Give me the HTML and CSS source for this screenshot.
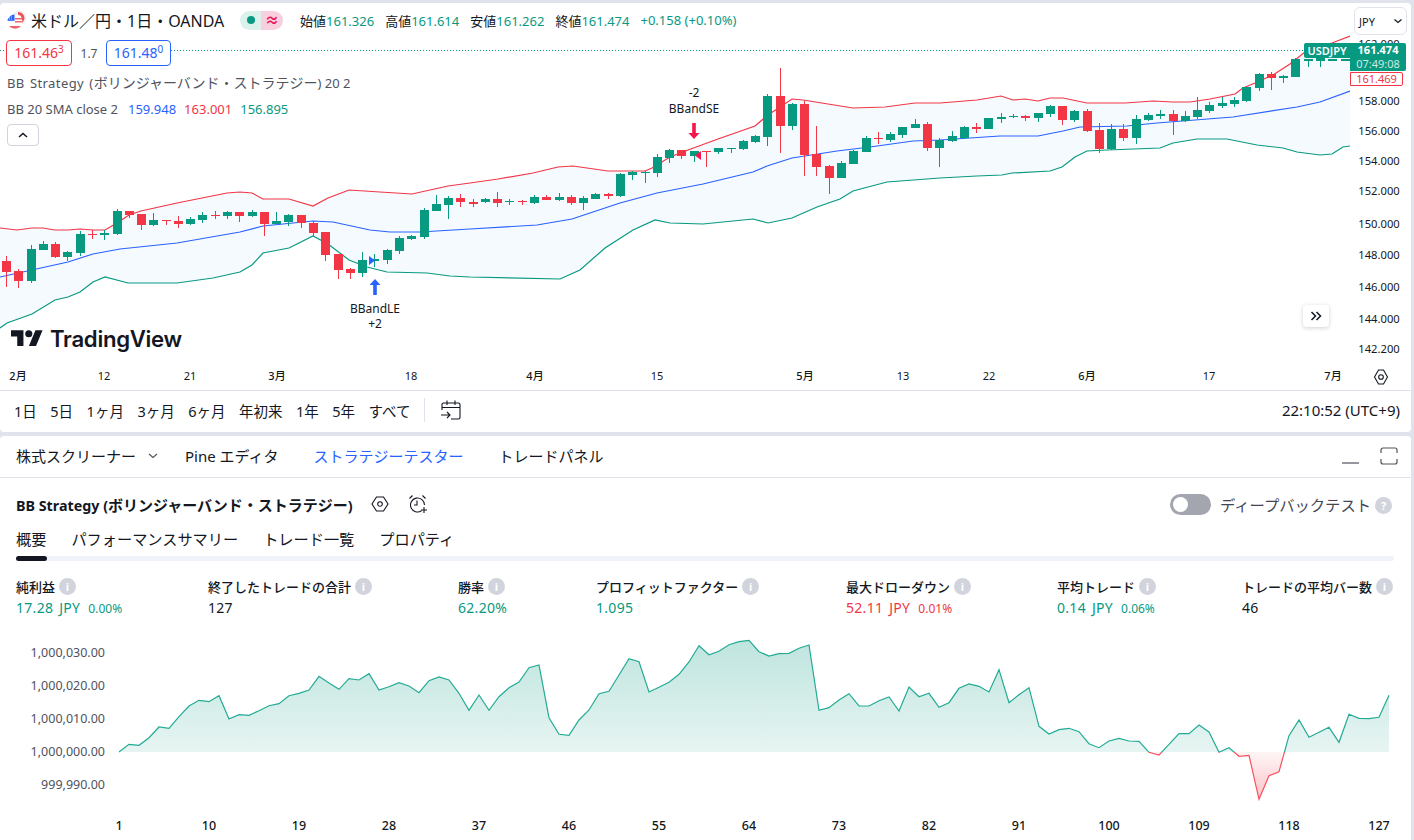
FILE: index.html
```html
<!DOCTYPE html>
<html lang="ja">
<head>
<meta charset="utf-8">
<title>USDJPY</title>
<link rel="stylesheet" href="styles.css">
</head>
<body>
<section class="panel chart-panel">
  <div class="chart">
    <svg id="market" class="market" viewBox="0 3 1411 387" width="1411" height="387" xmlns="http://www.w3.org/2000/svg">
      <defs><clipPath id="pane"><rect x="0" y="3" width="1350" height="387"/></clipPath></defs>
      <g clip-path="url(#pane)">
        <path id="band" class="band"/>
        <line x1="0" y1="50.5" x2="1350" y2="50.5" class="last-line"/>
        <polyline id="lower" class="line line-lower"/>
        <polyline id="middle" class="line line-middle"/>
        <polyline id="upper" class="line line-upper"/>
        <g id="candles" shape-rendering="crispEdges"></g>
        <path class="sig-blue" d="M375 279l5.500 6h-3.700v10h-3.600v-10h-3.700z"/>
        <path class="sig-blue" d="M369 256l6 4.500-6 4.500z"/>
        <path class="sig-red" d="M692.200 123h3.600v10h3.700l-5.500 6-5.500-6h3.700z"/>
        <path class="sig-red" d="M701 151v9l-6-4.500z"/>
        <text class="sig-text" x="375" y="313">BBandLE</text>
        <text class="sig-text" x="375" y="328">+2</text>
        <text class="sig-text" x="694" y="97">-2</text>
        <text class="sig-text" x="694" y="113">BBandSE</text>
      </g>
      <text class="price" x="1379" y="48">162.000</text>
      <text class="price" x="1379" y="105">158.000</text>
      <text class="price" x="1379" y="135">156.000</text>
      <text class="price" x="1379" y="165">154.000</text>
      <text class="price" x="1379" y="195">152.000</text>
      <text class="price" x="1379" y="228">150.000</text>
      <text class="price" x="1379" y="259">148.000</text>
      <text class="price" x="1379" y="291">146.000</text>
      <text class="price" x="1379" y="323">144.000</text>
      <text class="price" x="1379" y="353">142.200</text>
      <text class="time strong" x="18" y="380">2月</text>
      <text class="time" x="104" y="380">12</text>
      <text class="time" x="190" y="380">21</text>
      <text class="time strong" x="277" y="380">3月</text>
      <text class="time" x="411" y="380">18</text>
      <text class="time strong" x="535" y="380">4月</text>
      <text class="time" x="657" y="380">15</text>
      <text class="time strong" x="805" y="380">5月</text>
      <text class="time" x="903" y="380">13</text>
      <text class="time" x="989" y="380">22</text>
      <text class="time strong" x="1087" y="380">6月</text>
      <text class="time" x="1209" y="380">17</text>
      <text class="time strong" x="1333" y="380">7月</text>
      <g class="icon-line" transform="translate(1373 369)">
        <path d="M5.500 1h5l4 7-4 7h-5l-4-7z"/><circle cx="8" cy="8" r="2.300"/>
      </g>
    </svg>

    <div class="legend">
      <div class="symbol-row">
        <svg class="flag" viewBox="0 0 20 20" width="20" height="20" xmlns="http://www.w3.org/2000/svg">
          <circle cx="12" cy="8" r="7.500" fill="#f0f1f6"/>
          <path d="M11 3.500a4.800 4.800 0 0 1 5 4.500 4.800 4.800 0 0 1-2.500 4" fill="none" stroke="#ef5350" stroke-width="3"/>
          <circle cx="8" cy="12" r="7.500" fill="#fff"/>
          <path d="M2 16a8 8 0 0 0 12 0z" fill="#f0626b"/>
          <path d="M.500 11a7.500 7.500 0 0 1 7-6.500V11z" fill="#2962ff"/>
          <path d="M8 8h7v1.500H8zM8 11h7.500v1.500H8z" fill="#f0626b"/>
          <path d="M2 9h4M2 7h4M1.500 11h5" stroke="#fff" stroke-width=".8" stroke-dasharray="1 1"/>
        </svg>
        <span class="symbol">米ドル／円・1日・OANDA</span>
        <span class="status"><span class="status-open"><i class="status-dot"></i></span><span class="status-delay">≈</span></span>
        <span class="ohlc">
          <span class="o-item">始値<b>161.326</b></span>
          <span class="o-item">高値<b>161.614</b></span>
          <span class="o-item">安値<b>161.262</b></span>
          <span class="o-item">終値<b>161.474</b></span>
          <b class="o-chg">+0.158 (+0.10%)</b>
        </span>
      </div>
      <div class="trade-row">
        <span class="quote quote-sell">161.46<sup>3</sup></span>
        <span class="spread">1.7</span>
        <span class="quote quote-buy">161.48<sup>0</sup></span>
      </div>
      <div class="study-row study-strategy"><span><span class="lead">BB Strategy (</span><span class="jp">ボリンジャーバンド・ストラテジー</span>) 20 2</span></div>
      <div class="study-row study-bb">BB 20 SMA close 2
        <span class="v-blue">159.948</span><span class="v-red">163.001</span><span class="v-green">156.895</span>
      </div>
      <div class="collapse"><svg viewBox="0 0 12 8" width="12" height="8" xmlns="http://www.w3.org/2000/svg"><path d="M2 6l4-3.500L10 6" fill="none" stroke="#131722" stroke-width="1.500"/></svg></div>
    </div>

    <div class="logo">
      <svg viewBox="0 4 36 18" width="32" height="16.500" xmlns="http://www.w3.org/2000/svg"><path d="M14 22H7V11H0V4h14v18zM28 22h-8l7.500-18h8L28 22z" fill="#131722"/><circle cx="20" cy="8" r="4" fill="#131722"/></svg>
      <span class="logo-text">TradingView</span>
    </div>

    <div class="currency">JPY<svg viewBox="0 0 10 6" width="10" height="6" xmlns="http://www.w3.org/2000/svg"><path d="M1.500 1.500L5 4.500l3.500-3" fill="none" stroke="#131722" stroke-width="1.200"/></svg></div>
    <div class="tag-name">USDJPY</div>
    <div class="tag-price"><b>161.474</b><span>07:49:08</span></div>
    <div class="tag-sell">161.469</div>
    <div class="scroll-btn"><svg viewBox="0 0 12 10" width="12" height="10" xmlns="http://www.w3.org/2000/svg"><path d="M1.500 1l4 4-4 4M6.500 1l4 4-4 4" fill="none" stroke="#131722" stroke-width="1.500"/></svg></div>
  </div>

  <div class="range-bar">
    <span class="range">1日</span><span class="range">5日</span><span class="range">1ヶ月</span><span class="range">3ヶ月</span><span class="range">6ヶ月</span><span class="range">年初来</span><span class="range">1年</span><span class="range">5年</span><span class="range">すべて</span>
    <i class="sep"></i>
    <svg class="cal" viewBox="0 0 22 22" width="22" height="22" xmlns="http://www.w3.org/2000/svg"><path d="M2 11V5.500A1.500 1.500 0 0 1 3.500 4h15A1.500 1.500 0 0 1 20 5.500v13a1.500 1.500 0 0 1-1.500 1.500H11M2 8.500h18M7 1.500V6M15 1.500V6M1 16h9M7 13l3 3-3 3" fill="none" stroke="#131722" stroke-width="1.100"/></svg>
    <span class="clock">22:10:52 (UTC+9)</span>
  </div>
</section>

<section class="panel tester">
  <nav class="tabs">
    <span class="tab tab-screener">株式スクリーナー<svg viewBox="0 0 10 6" width="10" height="6" xmlns="http://www.w3.org/2000/svg"><path d="M1 1l4 3.500L9 1" fill="none" stroke="#50535e" stroke-width="1.100"/></svg></span>
    <span class="tab tab-pine">Pine エディタ</span>
    <span class="tab tab-active">ストラテジーテスター</span>
    <span class="tab">トレードパネル</span>
    <span class="win-icons">
      <svg viewBox="0 0 17 2" width="17" height="2" xmlns="http://www.w3.org/2000/svg"><path d="M0 1h17" stroke="#50535e" stroke-width="1.200"/></svg>
      <svg viewBox="0 0 18 18" width="18" height="18" xmlns="http://www.w3.org/2000/svg"><path d="M1 6V3a2 2 0 0 1 2-2h12a2 2 0 0 1 2 2v3M1 12v3a2 2 0 0 0 2 2h12a2 2 0 0 0 2-2v-3" fill="none" stroke="#50535e" stroke-width="1.200"/></svg>
    </span>
  </nav>
  <div class="title-row">
    <strong class="strategy-name">BB Strategy (<span class="jp-title">ボリンジャーバンド・ストラテジー</span>)</strong>
    <svg class="t-icon t-gear" viewBox="0 0 18 18" width="18" height="18" xmlns="http://www.w3.org/2000/svg"><path d="M5.500 2h7l4.500 7-4.500 7h-7L1 9z M11.300 9a2.300 2.300 0 1 1-4.600 0 2.300 2.300 0 0 1 4.600 0z" fill="none" stroke="#131722" stroke-width="1.100"/></svg>
    <svg class="t-icon t-alarm" viewBox="0 0 20 20" width="20" height="20" xmlns="http://www.w3.org/2000/svg"><path d="M13.500 16.700A7 7 0 1 1 16.500 11M9 6.500v4.500H6M1.500 4.500l3-3M17.500 4.500l-3-3M16 13v6M13 16h6" fill="none" stroke="#131722" stroke-width="1.100"/></svg>
    <span class="deep">
      <i class="toggle"><i class="knob"></i></i>
      <span class="deep-label">ディープバックテスト</span>
      <i class="info info-q">?</i>
    </span>
  </div>
  <div class="subtabs">
    <span class="subtab">概要</span><span class="subtab">パフォーマンスサマリー</span><span class="subtab">トレード一覧</span><span class="subtab">プロパティ</span>
  </div>
  <div class="track"><i class="thumb"></i></div>
  <div class="metrics">
    <div class="metric"><div class="m-label">純利益<i class="info">i</i></div><div class="m-value v-green">17.28 JPY<small>0.00%</small></div></div>
    <div class="metric"><div class="m-label">終了したトレードの合計<i class="info">i</i></div><div class="m-value">127</div></div>
    <div class="metric"><div class="m-label">勝率<i class="info">i</i></div><div class="m-value v-green">62.20%</div></div>
    <div class="metric"><div class="m-label">プロフィットファクター<i class="info">i</i></div><div class="m-value v-green">1.095</div></div>
    <div class="metric"><div class="m-label">最大ドローダウン<i class="info">i</i></div><div class="m-value v-red">52.11 JPY<small>0.01%</small></div></div>
    <div class="metric"><div class="m-label">平均トレード<i class="info">i</i></div><div class="m-value v-green">0.14 JPY<small>0.06%</small></div></div>
    <div class="metric"><div class="m-label">トレードの平均バー数<i class="info">i</i></div><div class="m-value">46</div></div>
  </div>
  <svg id="equity" class="equity" viewBox="0 630 1411 210" width="1411" height="210" xmlns="http://www.w3.org/2000/svg">
    <defs>
      <linearGradient id="gPos" gradientUnits="userSpaceOnUse" x1="0" y1="640" x2="0" y2="752"><stop offset="0" stop-color="#089981" stop-opacity=".26"/><stop offset="1" stop-color="#089981" stop-opacity=".1"/></linearGradient>
      <linearGradient id="gNeg" gradientUnits="userSpaceOnUse" x1="0" y1="752" x2="0" y2="800"><stop offset="0" stop-color="#f23645" stop-opacity=".05"/><stop offset="1" stop-color="#f23645" stop-opacity=".3"/></linearGradient>
      <clipPath id="above"><rect x="0" y="630" width="1411" height="122"/></clipPath>
      <clipPath id="below"><rect x="0" y="752" width="1411" height="88"/></clipPath>
    </defs>
    <path id="eqFillPos" fill="url(#gPos)" clip-path="url(#above)"/>
    <path id="eqFillNeg" fill="url(#gNeg)" clip-path="url(#below)"/>
    <polyline id="eqLinePos" class="eq-line eq-pos" clip-path="url(#above)"/>
    <polyline id="eqLineNeg" class="eq-line eq-neg" clip-path="url(#below)"/>
    <text class="eq-y" x="105" y="657">1,000,030.00</text>
    <text class="eq-y" x="105" y="690">1,000,020.00</text>
    <text class="eq-y" x="105" y="723">1,000,010.00</text>
    <text class="eq-y" x="105" y="756">1,000,000.00</text>
    <text class="eq-y" x="105" y="789">999,990.00</text>
    <g id="eqX"></g>
  </svg>
</section>
<script src="chart.js"></script>
</body>
</html>
```
FILE: styles.css
```css
* { box-sizing: border-box; }
html, body { margin: 0; height: 100%; overflow: hidden; }
body {
  background: #e0e3eb;
  padding: 3px 3px 0 0;
  font-family: "Noto Sans", "Noto Sans CJK JP", sans-serif;
  color: #131722;
}
i { font-style: normal; }
.panel { background: #fff; border-radius: 4px; }
.chart-panel { height: 429px; display: flex; flex-direction: column; }
.chart { position: relative; height: 387px; flex: none; overflow: hidden; }
.market { position: absolute; left: 0; top: 0; }

.band { fill: #f5fafe; }
.last-line { stroke: #089981; stroke-width: 1; stroke-dasharray: 1 2; }
.line { fill: none; stroke-width: 1.200; }
.line-upper { stroke: #f23645; }
.line-middle { stroke: #2962ff; }
.line-lower { stroke: #089981; }
.sig-blue { fill: #2962ff; }
.sig-red { fill: #f7154a; }
.sig-text { font-size: 12px; text-anchor: middle; fill: #131722; }
.price { font-size: 11.200px; text-anchor: middle; fill: #131722; }
.time { font-size: 11px; text-anchor: middle; fill: #131722; }
.time.strong { font-weight: 500; }
.icon-line { fill: none; stroke: #131722; stroke-width: 1.100; }

.legend { position: absolute; left: 0; top: 0; display: flex; flex-direction: column; align-items: flex-start; padding-left: 7px; }
.symbol-row { display: flex; align-items: center; height: 34px; }
.flag { margin-right: 4px; }
.symbol { font-size: 16px; white-space: nowrap; width: 209px; }
.status { display: flex; height: 19px; border-radius: 10px; overflow: hidden; width: 43px; }
.status-open { width: 21px; background: #daf1ec; display: flex; align-items: center; justify-content: center; }
.status-dot { width: 8px; height: 8px; border-radius: 50%; background: #089981; }
.status-delay { flex: 1; background: #f8cfdf; color: #e4195d; text-align: center; font-size: 14px; line-height: 18px; font-weight: 700; }
.ohlc { display: flex; gap: 11px; margin-left: 17px; font-size: 13px; white-space: nowrap; }
.o-item b, .o-chg, .v-green { color: #089981; font-weight: 400; }
.v-blue { color: #2962ff; }
.v-red { color: #f23645; }

.trade-row { display: flex; align-items: center; height: 26px; margin: 3px 0 0 -1px; }
.quote { height: 26px; width: 66px; border: 1px solid; border-radius: 4px; background: #fff; font-size: 14px; line-height: 24px; text-align: center; white-space: nowrap; }
.quote sup { font-size: 10px; line-height: 0; vertical-align: 5px; }
.quote-sell { color: #f23645; border-color: #f23645; }
.quote-buy { color: #2962ff; border-color: #2962ff; width: 65px; }
.spread { width: 34px; text-align: center; font-size: 12px; color: #50535e; background: #fff; }

.study-row { font-size: 13px; color: #50535e; white-space: nowrap; display: flex; gap: 8px; align-items: center; }
.study-strategy { height: 20px; margin-top: 4px; padding-top: 4px; }
.lead { letter-spacing: .4px; word-spacing: 1.500px; }
.jp { font-size: 14px; }
.study-bb { height: 20px; margin-top: 9px; }
.study-bb .v-blue { margin-left: 2px; }
.collapse { width: 32px; height: 22px; margin-top: 5px; border: 1px solid #d1d4dc; border-radius: 4px; background: #fff; display: flex; align-items: center; justify-content: center; }

.logo { position: absolute; left: 11px; top: 323px; display: flex; align-items: center; gap: 7px; height: 24px; }
.logo-text { font-family: Inter, sans-serif; font-size: 22.200px; font-weight: 600; letter-spacing: -.3px; }

.currency { position: absolute; left: 1354px; top: 4px; width: 53px; height: 28px; background: #fff; border: 1px solid #e0e3eb; border-radius: 6px; font-size: 11px; display: flex; align-items: center; justify-content: space-between; padding: 0 3px 0 4px; }
.tag-name { position: absolute; left: 1304px; top: 40px; width: 46px; height: 15px; background: #089981; color: #fff; font-size: 11px; font-weight: 600; line-height: 15px; text-align: center; border-radius: 2px 0 0 2px; }
.tag-price { position: absolute; left: 1350px; top: 40px; width: 56px; height: 28px; background: #089981; color: #fff; font-size: 11px; line-height: 14px; display: flex; flex-direction: column; align-items: center; border-radius: 0 2px 2px 0; }
.tag-price span { color: #cce9e3; font-size: 11px; }
.tag-sell { position: absolute; left: 1350px; top: 69px; width: 53px; height: 14px; background: #fff; border: 1px solid #f23645; color: #f23645; font-size: 11px; line-height: 12px; text-align: center; border-radius: 0 2px 2px 0; }
.scroll-btn { position: absolute; left: 1303px; top: 302px; width: 26px; height: 22px; background: #fff; border-radius: 4px; box-shadow: 0 1px 4px rgba(19,23,34,.2); display: flex; align-items: center; justify-content: center; }

.range-bar { flex: 1; border-top: 1px solid #e0e3eb; display: flex; align-items: center; padding: 0 11px 3px 14px; font-size: 14.500px; color: #131722; }
.range { white-space: nowrap; margin-right: 13.500px; }
.sep { width: 1px; height: 24px; background: #e0e3eb; }
.cal { margin-left: 15px; }
.clock { margin-left: auto; font-size: 15px; }

.tester { margin-top: 4px; height: 404px; border-radius: 4px 4px 0 0; }
.tabs { height: 42px; border-bottom: 1px solid #e0e3eb; display: flex; align-items: center; padding: 0 13px 2px 16px; font-size: 15px; }
.tab { color: #131722; white-space: nowrap; margin-right: 35px; }
.tab-screener { display: flex; align-items: center; gap: 12px; margin-right: 27px; }
.tab-active { color: #2962ff; }
.win-icons { margin-left: auto; display: flex; align-items: center; gap: 21px; }
.win-icons svg:first-child { margin-top: 14px; }

.title-row { display: flex; align-items: center; height: 50px; padding: 2px 19px 0 16px; }
.strategy-name { font-size: 14.300px; font-weight: 700; white-space: nowrap; }
.jp-title { font-size: 15px; }
.t-icon { margin-left: 18px; }
.t-alarm { margin-left: 19px; }
.deep { margin-left: auto; display: flex; align-items: center; }
.toggle { width: 41px; height: 21px; border-radius: 11px; background: #a3a6af; padding: 3px; margin-right: 9px; display: block; }
.knob { display: block; width: 15px; height: 15px; background: #fff; border-radius: 50%; }
.deep-label { font-size: 15.300px; color: #434651; white-space: nowrap; }
.info { display: inline-flex; width: 17px; height: 17px; border-radius: 50%; background: #d1d4dc; color: #fff; font-size: 11px; font-weight: 700; align-items: center; justify-content: center; margin-left: 4px; flex: none; }
.info-q { margin-top: 3px; }

.subtabs { display: flex; gap: 25px; padding: 0 0 2px 16px; font-size: 15.200px; height: 22px; align-items: center; color: #131722; }
.subtab { white-space: nowrap; }
.track { margin: 6px 17px 0 16px; height: 5px; background: #f0f3fa; border-radius: 3px; }
.thumb { display: block; width: 31px; height: 5px; background: #131722; border-radius: 3px; }

.metrics { display: grid; grid-template-columns: 192px 250px 138px 250px 211px 185px auto; padding: 15px 0 0 16px; }
.m-label { font-size: 13px; font-weight: 500; display: flex; align-items: center; height: 20px; white-space: nowrap; }
.m-value { font-size: 14px; height: 20px; margin-top: 2px; line-height: 20px; white-space: nowrap; letter-spacing: .3px; word-spacing: 2px; }
.m-value small { font-size: 12px; margin-left: 8px; letter-spacing: 0; }
.equity { display: block; margin-top: 12px; }
.eq-line { fill: none; stroke-width: 1.200; }
.eq-pos { stroke: #22ab94; }
.eq-neg { stroke: #f7525f; }
.eq-y { font-size: 12.500px; text-anchor: end; fill: #50535e; }
.eq-x { font-size: 12.500px; text-anchor: middle; fill: #131722; font-weight: 500; }
```
FILE: chart.js
```js
// Candles: [colour, high, bodyTop, bodyBottom, low] in chart pixels.
var G = 'g', R = 'r';
var bars = [
[R,256,261,272,287],[R,269,271,281,288],[G,245,249,281,283],[G,241,244,250,250],[R,242,244,257,258],
[G,251,252,257,261],[G,231,234,253,256],[R,230,234,235,239],[G,230,233,235,240],[G,209,211,234,235],
[R,211,211,215,218],[R,214,214,225,230],[G,213,220,225,226],[R,220,220,221,225],[R,216,221,224,228],
[G,217,219,224,225],[G,212,215,220,223],[R,211,215,216,219],[G,211,212,216,219],[R,212,212,216,222],
[G,210,212,216,217],[R,212,212,224,236],[G,212,221,224,224],[G,214,215,222,226],[R,215,215,223,228],
[R,221,223,233,236],[R,232,232,255,261],[R,254,254,270,279],[R,268,269,273,279],[G,252,260,273,277],
[G,254,259,261,267],[G,249,250,260,264],[G,236,238,251,254],[G,235,236,239,240],[G,208,210,237,239],
[G,195,204,211,211],[G,196,198,205,219],[R,194,198,202,207],[R,199,202,204,207],[G,198,199,202,203],
[R,192,199,203,207],[G,199,201,202,205],[R,200,201,202,205],[G,195,197,203,204],[R,195,197,200,200],
[G,193,197,200,201],[R,195,197,203,205],[G,196,198,203,210],[G,193,194,199,199],[R,193,194,196,199],
[G,173,174,196,197],[G,171,172,175,180],[G,171,172,173,183],[G,154,157,173,177],[G,149,150,158,163],
[R,150,150,156,159],[G,151,151,156,162],[R,151,151,152,167],[G,148,148,152,154],[G,148,148,149,153],
[G,140,141,149,150],[G,135,136,142,143],[G,94,96,137,146],[R,68,96,126,153],[G,103,104,126,130],
[R,101,104,155,176],[R,126,154,167,176],[R,165,166,178,194],[G,161,163,178,178],[G,150,151,164,164],
[G,136,138,152,152],[R,132,138,139,144],[G,132,134,140,142],[G,127,127,135,138],[G,119,124,128,128],
[R,122,124,148,151],[G,138,140,148,167],[G,131,136,141,142],[G,126,127,138,139],[R,123,127,129,133],
[G,118,118,129,129],[G,113,117,119,123],[G,114,116,117,118],[R,115,116,118,121],[G,113,113,118,122],
[G,105,106,114,117],[R,106,106,120,125],[G,110,111,120,122],[R,109,111,131,132],[R,123,130,149,153],
[G,124,129,149,150],[R,124,129,138,141],[G,115,119,138,144],[G,113,115,120,121],[G,110,114,116,119],
[R,110,114,121,135],[G,111,116,121,122],[G,97,110,117,119],[G,102,105,111,113],[G,97,103,106,108],
[G,97,100,104,107],[G,87,87,101,102],[G,73,74,88,91],[R,72,74,78,90],[G,75,76,78,83],
[G,58,59,77,77],[G,59,59,61,67],[G,58,58,61,67],[G,59,59,61,61],[G,59,59,61,61]
];
var upper = [[0,228],[17,230],[32,228],[43,228],[55,230],[68,230],[80,229],[93,230],[105,230],[117,223],[129,215],[141,211],[177,203],[227,193],[240,192],[252,193],[263,199],[289,199],[313,206],[328,198],[349,190],[380,192],[412,194],[448,186],[470,183],[498,179],[533,173],[558,167],[573,166],[587,168],[608,171],[645,171],[652,168],[670,157],[688,150],[718,139],[755,126],[768,115],[792,99],[803,100],[853,108],[885,107],[915,103],[940,103],[977,100],[1001,96],[1013,100],[1025,99],[1038,101],[1050,98],[1063,98],[1087,103],[1107,103],[1125,103],[1153,101],[1173,102],[1190,102],[1210,99],[1235,94],[1243,88],[1255,83],[1273,75],[1290,64],[1310,48],[1332,43],[1350,36]];
var middle = [[0,277],[68,262],[93,254],[120,249],[177,243],[240,232],[263,226],[313,221],[333,222],[370,230],[390,232],[420,232],[470,229],[537,225],[572,219],[620,203],[657,193],[703,184],[753,172],[767,166],[792,158],[837,151],[870,147],[913,141],[940,140],[1000,136],[1038,136],[1063,131],[1080,127],[1127,126],[1157,123],[1233,117],[1297,107],[1320,102],[1350,91]];
var lower = [[0,328],[7,323],[32,314],[55,300],[68,297],[80,292],[93,282],[105,277],[128,283],[177,283],[213,278],[240,272],[252,265],[263,253],[289,248],[313,236],[328,244],[349,260],[367,267],[387,272],[427,273],[450,276],[470,277],[560,279],[580,270],[605,248],[633,230],[655,220],[670,223],[703,224],[753,219],[768,223],[792,218],[817,207],[840,199],[853,191],[887,182],[940,178],[977,176],[1002,175],[1012,173],[1050,171],[1062,167],[1075,157],[1087,151],[1107,150],[1160,148],[1173,143],[1197,139],[1227,139],[1257,145],[1283,148],[1297,152],[1320,155],[1332,154],[1343,147],[1350,146]];

function pts(a) { return a.map(function (p) { return p[0] + ',' + p[1]; }).join(' '); }
function el(id) { return document.getElementById(id); }

el('upper').setAttribute('points', pts(upper));
el('middle').setAttribute('points', pts(middle));
el('lower').setAttribute('points', pts(lower));
el('band').setAttribute('d', 'M' + pts(upper) + ' L' + pts(lower.slice().reverse()) + 'Z');

var NS = 'http://www.w3.org/2000/svg', green = '', red = '';
bars.forEach(function (b, i) {
  var x = Math.floor(6.5 + 12.28 * i);
  var d = 'M' + x + ' ' + b[1] + 'h1V' + b[4] + 'h-1Z' +
          'M' + (x - 4) + ' ' + b[2] + 'h9V' + b[3] + 'h-9Z';
  if (b[0] === G) { green += d; } else { red += d; }
});
[[green, '#089981'], [red, '#f23645']].forEach(function (c) {
  var p = document.createElementNS(NS, 'path');
  p.setAttribute('d', c[0]);
  p.setAttribute('fill', c[1]);
  el('candles').appendChild(p);
});

// Equity curve: y pixels per trade, one point each 10px starting at x=119.
var eq = [752,744.3,745.3,737.7,727,728.3,716.7,706,700.3,701.7,695.7,719,714.7,715.3,710.7,705.7,703.7,695.7,693.3,690,676.3,683,689.3,678.7,680,673.7,690,686.7,682.7,686,692.7,680.7,677,680,693.3,710.3,695,710.3,696.7,687.7,682,667.7,665,717.7,734.3,735.3,720,710,693.7,691.3,675,658.7,661.7,692,687.3,682.3,674.3,662,645.7,654.7,651.3,644.7,641.7,640.3,651.7,656,653.7,653.3,648.3,645,710.3,707.7,700,693.7,706,706,700.7,697,711,687,696.7,693.3,707.3,702.7,688.3,684,686.3,692,669.7,702.7,694.7,687.7,726.3,734,729.7,728.3,731.7,743.7,747.7,741,738.3,741,741.3,752.3,755,744.3,733.7,733.7,725,732,752.3,747.7,756.3,755.3,799.3,775.7,771.7,735.7,720,737.3,732.3,727.3,742.3,714.3,718.3,718.7,717.3,695.3];
var line = eq.map(function (y, i) { return [119 + 10 * i, y]; });
var lastX = line[line.length - 1][0];
var area = 'M119,752L' + pts(line) + ' L' + lastX + ',752Z';
['eqFillPos', 'eqFillNeg'].forEach(function (id) { el(id).setAttribute('d', area); });
['eqLinePos', 'eqLineNeg'].forEach(function (id) { el(id).setAttribute('points', pts(line)); });

for (var n = 1; n <= 127; n += 9) {
  var t = document.createElementNS(NS, 'text');
  t.setAttribute('class', 'eq-x');
  t.setAttribute('x', 119 + (n - 1) * 10);
  t.setAttribute('y', 830);
  t.textContent = n;
  el('eqX').appendChild(t);
}
```
